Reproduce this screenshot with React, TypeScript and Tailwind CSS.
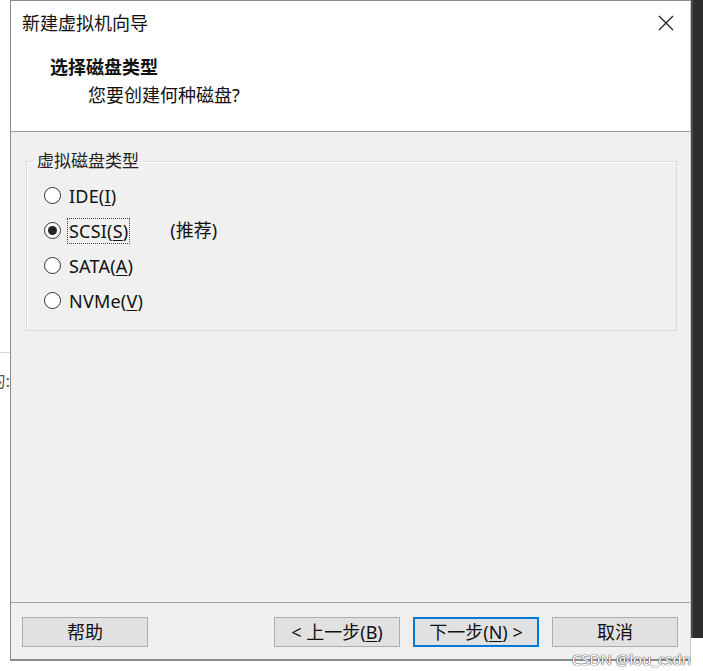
import React from 'react'

const font = "font-['Noto_Sans','Noto_Sans_CJK_SC',sans-serif]"

interface DiskOption {
  id: string
  label: string
  key: string
  checked?: boolean
  note?: string
}

const options: DiskOption[] = [
  { id: 'ide', label: 'IDE', key: 'I' },
  { id: 'scsi', label: 'SCSI', key: 'S', checked: true, note: '(推荐)' },
  { id: 'sata', label: 'SATA', key: 'A' },
  { id: 'nvme', label: 'NVMe', key: 'V' },
]

function Radio({ checked }: { checked?: boolean }) {
  return (
    <span className="w-[17px] h-[17px] rounded-full border border-[#333] bg-white flex items-center justify-center shrink-0">
      {checked && <span className="w-[9px] h-[9px] rounded-full bg-[#222]" />}
    </span>
  )
}

function Button({ children, primary }: { children: React.ReactNode; primary?: boolean }) {
  return (
    <button
      className={`w-[126px] h-[30px] bg-[#e1e1e1] text-[18px] text-[#111] flex items-center justify-center ${
        primary ? 'border-2 border-[#0078d7]' : 'border border-[#adadad]'
      }`}
    >
      {children}
    </button>
  )
}

export default function App() {
  return (
    <div className={`w-[703px] h-[671px] bg-white flex relative overflow-hidden ${font} text-[#111]`}>
      {/* background window peeking on the left */}
      <div className="w-[10px] flex flex-col shrink-0">
        <div className="h-[352px]" />
        <div className="h-px bg-[#d4d4d4]" />
        <div className="h-[17px]" />
        <div className="flex justify-end overflow-hidden whitespace-nowrap text-[17px] leading-[22px] text-[#555]">
          的:
        </div>
      </div>

      {/* dialog */}
      <div className="w-[681px] h-[661px] flex flex-col border-l border-b-2 border-t border-[#8a8a8a] border-r border-r-[#c8c8c8] shrink-0">
        <div className="h-[44px] bg-white flex items-center justify-between pl-[11px] pr-[15px]">
          <span className="text-[18px] leading-none">新建虚拟机向导</span>
          <svg width="18" height="18" viewBox="0 0 18 18">
            <path d="M2 2 L16 16 M16 2 L2 16" stroke="#222" strokeWidth="1.3" fill="none" />
          </svg>
        </div>
        <div className="h-[86px] bg-white pt-[8px]">
          <div className="pl-[39px] text-[18px] leading-[28px] font-bold">选择磁盘类型</div>
          <div className="pl-[77px] text-[18px] leading-[28px]">您要创建何种磁盘?</div>
        </div>
        <div className="h-px bg-[#a0a0a0]" />
        <div className="h-[470px] bg-[#f0f0f0] pt-[15px] pl-[15px] pr-[13px]">
          <fieldset className="border border-[#dadada] pb-[12px] shadow-[inset_1px_1px_0_#fff]">
            <legend className="ml-[6px] px-[4px] text-[17px] leading-[28px] text-[#222]">虚拟磁盘类型</legend>
            <div className="pt-[3px] pl-[17px] flex flex-col">
              {options.map((o) => (
                <div key={o.id} className="h-[35px] flex items-center">
                  <Radio checked={o.checked} />
                  <span
                    className={`ml-[7px] text-[18px] leading-[24px] px-px tracking-[0.2px] ${
                      o.checked ? 'outline outline-1 outline-dotted outline-[#444]' : ''
                    }`}
                  >
                    {o.label}(<span className="underline underline-offset-2">{o.key}</span>)
                  </span>
                  {o.note && <span className="ml-[41px] text-[18px]">{o.note}</span>}
                </div>
              ))}
            </div>
          </fieldset>
        </div>
        <div className="h-px bg-[#a0a0a0]" />
        <div className="flex-1 bg-[#f0f0f0] pt-[14px] pl-[11px] pr-[12px] flex">
          <Button>帮助</Button>
          <div className="flex-1" />
          <div className="flex gap-[13px]">
            <Button>
              &lt; 上一步(<span className="underline underline-offset-2">B</span>)
            </Button>
            <Button primary>
              下一步(<span className="underline underline-offset-2">N</span>) &gt;
            </Button>
            <Button>取消</Button>
          </div>
        </div>
      </div>

      {/* background on the right */}
      <div className="flex-1 flex flex-col">
        <div className="h-[638px] bg-[#2e2e2e] border-l-2 border-[#4a4a4a]" />
      </div>

      {/* watermark */}
      <div className="absolute right-[12px] bottom-[4px] text-[15px] leading-none text-white [text-shadow:0_0_1px_#555,0_0_1px_#555,0_0_1px_#555]">
        CSDN @lou_csdn
      </div>
    </div>
  )
}
